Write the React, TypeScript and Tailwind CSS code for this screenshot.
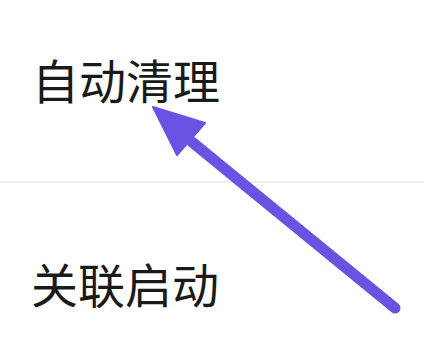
import React from "react";

export default function App() {
  const font = { fontFamily: '"Noto Sans CJK SC", "Noto Sans", sans-serif' };
  return (
    <div className="relative w-[424px] h-[356px] bg-white overflow-hidden" style={font}>
      <div className="flex flex-col pt-[55px]">
        <div className="pl-[32px] text-[47px] leading-[47px] h-[47px] text-[#1a1a1a]">自动清理</div>
        <div className="mt-[79px] h-[2px] bg-[#efefef]" />
        <div className="mt-[76px] pl-[31px] text-[47px] leading-[47px] h-[47px] text-[#1a1a1a]">关联启动</div>
      </div>
      <svg className="absolute left-0 top-0" width="424" height="356" viewBox="0 0 424 356">
        <line x1="192" y1="142" x2="395" y2="308" stroke="#6a53e3" strokeWidth="11" strokeLinecap="round" />
        <polygon points="153,107 205,123 177,155" fill="#6a53e3" stroke="#6a53e3" strokeWidth="2" strokeLinejoin="round" />
      </svg>
    </div>
  );
}
